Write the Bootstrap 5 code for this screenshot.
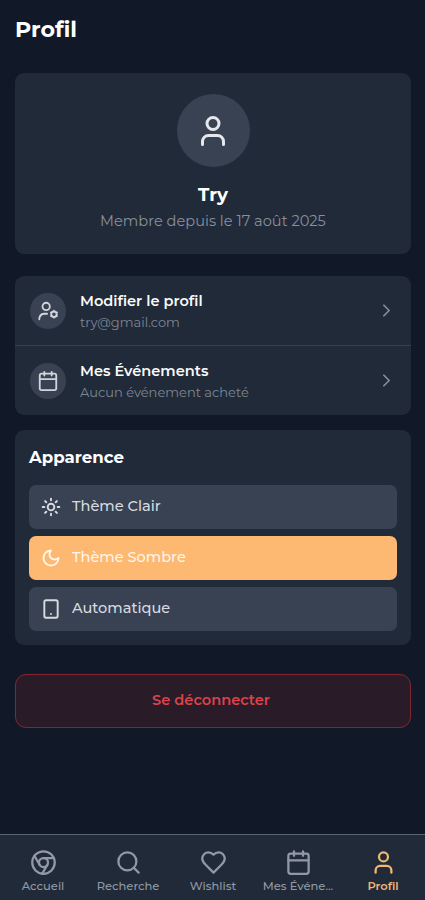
<!DOCTYPE html>
<html lang="fr" data-bs-theme="dark">
<head>
<meta charset="utf-8">
<meta name="viewport" content="width=device-width, initial-scale=1">
<title>Profil</title>
<link href="https://cdn.jsdelivr.net/npm/bootstrap@5.3.0/dist/css/bootstrap.min.css" rel="stylesheet">
<style>
body{background:#111827;font-family:Montserrat,Inter,"Open Sans",sans-serif;color:#f9fafb;height:900px;overflow:hidden}
svg{fill:none;stroke:currentColor;stroke-width:2;stroke-linecap:round;stroke-linejoin:round;flex:none;display:block}
main{padding:0 14px 0 15px}
.page-title{font-size:22.2px;font-weight:700;line-height:28px;padding:16px 0 29px;margin:0}
.panel{background:#212a38;border-radius:9px}
.profile-panel{height:181px;margin-bottom:22px;padding-top:21px}
.avatar{width:73px;height:73px;background:#394252;color:#e5e7eb}
.user-name{font-size:18.3px;font-weight:700;line-height:24px;margin:16px 0 0}
.since{font-size:14.6px;line-height:20px;color:#88909d;margin-top:4px}
.entry{height:69px;padding:0 14px 0 15px;color:inherit}
.entry+.entry{border-top:1px solid #374151;height:70px}
.bubble{width:36px;height:36px;background:#394252;color:#d1d5db;margin-right:14px}
.entry-title{font-size:14.55px;font-weight:600;line-height:20px;margin-top:1px}
.entry-note{font-size:13px;line-height:18px;color:#7f8795;margin-top:2px}
.chev{color:#858d9a}
.theme-panel{height:215px;margin-top:15px;padding:15px 14px}
.theme-panel h2{font-size:16.6px;font-weight:700;line-height:24px;margin:0 0 16px}
.theme{height:44px;border:0;border-radius:7px;background:#394252;color:#d7dbe1;padding:0 12px;gap:11px;font-size:14.55px;font-weight:500;margin-bottom:7px}
.theme svg{stroke-width:2.3}
.theme.chosen{background:#fdb872;color:#fff5e9}
.logout{height:54px;padding:0 10px 1px 6px;margin-top:29px;border:1px solid #842630;border-radius:11px;background:#291b28;color:#dc444b;font-size:14.6px;font-weight:600}
.tabs{height:66px;background:#212a38;border-top:1px solid #5a6371;color:#9199a6}
.tab{width:85px;padding-top:14px;padding-left:1px;color:inherit;font-size:11.5px;font-weight:500;line-height:16px}
.tab span{margin-top:2px}
.tab.here{color:#f0b777;font-weight:600}
</style>
<script src="https://cdn.jsdelivr.net/npm/bootstrap@5.3.0/dist/js/bootstrap.bundle.min.js"></script>
</head>
<body class="d-flex flex-column">
<main class="flex-grow-1">
  <h1 class="page-title">Profil</h1>
  <section class="panel profile-panel d-flex flex-column align-items-center">
    <div class="avatar rounded-circle d-flex align-items-center justify-content-center">
      <svg width="36" height="36" viewBox="0 0 24 24"><circle cx="12" cy="7" r="4"/><path d="M19 21v-2a4 4 0 0 0-4-4H9a4 4 0 0 0-4 4v2"/></svg>
    </div>
    <h2 class="user-name">Try</h2>
    <div class="since">Membre depuis le 17 août 2025</div>
  </section>
  <section class="panel">
    <a href="#" class="entry d-flex align-items-center text-decoration-none">
      <span class="bubble rounded-circle d-flex align-items-center justify-content-center"><svg width="22" height="22" viewBox="0 0 24 24"><circle cx="10" cy="7" r="4"/><path d="M2.500 21v-1a6 6 0 0 1 6-5h2.500"/><circle cx="18.500" cy="15.500" r="3"/><path d="M18.500 11.500v1M18.500 18.500v1M15 13.500l.9.500M21.100 17l.9.500M22 13.500l-.9.500M15.900 17l-.9.500" stroke-width="1.600"/></svg></span>
      <span class="flex-grow-1"><span class="entry-title d-block">Modifier le profil</span><span class="entry-note d-block">try@gmail.com</span></span>
      <svg class="chev" width="21" height="21" viewBox="0 0 24 24"><path d="m9 18 6-6-6-6"/></svg>
    </a>
    <a href="#" class="entry d-flex align-items-center text-decoration-none">
      <span class="bubble rounded-circle d-flex align-items-center justify-content-center"><svg width="22" height="22" viewBox="0 0 24 24"><path d="M8 2v4M16 2v4M3 10h18"/><rect x="3" y="4" width="18" height="18" rx="2"/></svg></span>
      <span class="flex-grow-1"><span class="entry-title d-block">Mes Événements</span><span class="entry-note d-block">Aucun événement acheté</span></span>
      <svg class="chev" width="21" height="21" viewBox="0 0 24 24"><path d="m9 18 6-6-6-6"/></svg>
    </a>
  </section>
  <section class="panel theme-panel">
    <h2>Apparence</h2>
    <button class="theme w-100 d-flex align-items-center"><svg width="20" height="20" viewBox="0 0 24 24"><circle cx="12" cy="12" r="4"/><path d="M12 2v2M12 20v2M4.930 4.930l1.410 1.410M17.660 17.660l1.410 1.410M2 12h2M20 12h2M6.340 17.660l-1.410 1.410M19.070 4.930l-1.410 1.410"/></svg><span>Thème Clair</span></button>
    <button class="theme chosen w-100 d-flex align-items-center"><svg width="20" height="20" viewBox="0 0 24 24"><path d="M12 3a6 6 0 0 0 9 9 9 9 0 1 1-9-9Z"/></svg><span>Thème Sombre</span></button>
    <button class="theme w-100 d-flex align-items-center"><svg width="20" height="20" viewBox="0 0 24 24"><rect x="4" y="1.500" width="16" height="21" rx="2"/><path d="M12 18h.01"/></svg><span>Automatique</span></button>
  </section>
  <button class="logout w-100 d-block">Se déconnecter</button>
</main>
<nav class="tabs d-flex flex-shrink-0">
  <a href="#" class="tab d-flex flex-column align-items-center text-decoration-none"><svg width="27" height="27" viewBox="0 0 24 24"><circle cx="12" cy="12" r="10"/><circle cx="12" cy="12" r="4"/><path d="M21.170 8H12M3.950 6.060 8.540 14M10.880 21.940 15.460 14"/></svg><span>Accueil</span></a>
  <a href="#" class="tab d-flex flex-column align-items-center text-decoration-none"><svg width="27" height="27" viewBox="0 0 24 24"><circle cx="11" cy="11" r="8"/><path d="m21 21-4.300-4.300"/></svg><span>Recherche</span></a>
  <a href="#" class="tab d-flex flex-column align-items-center text-decoration-none"><svg width="27" height="27" viewBox="0 0 24 24"><path d="M19 14c1.490-1.460 3-3.210 3-5.500A5.500 5.500 0 0 0 16.500 3c-1.760 0-3 .5-4.500 2-1.500-1.500-2.740-2-4.500-2A5.500 5.500 0 0 0 2 8.500c0 2.300 1.500 4.050 3 5.500l7 7Z"/></svg><span>Wishlist</span></a>
  <a href="#" class="tab d-flex flex-column align-items-center text-decoration-none"><svg width="27" height="27" viewBox="0 0 24 24"><path d="M8 2v4M16 2v4M3 10h18"/><rect x="3" y="4" width="18" height="18" rx="2"/></svg><span>Mes Événe...</span></a>
  <a href="#" class="tab here d-flex flex-column align-items-center text-decoration-none"><svg width="27" height="27" viewBox="0 0 24 24"><circle cx="12" cy="7" r="4"/><path d="M19 21v-2a4 4 0 0 0-4-4H9a4 4 0 0 0-4 4v2"/></svg><span>Profil</span></a>
</nav>
</body>
</html>
